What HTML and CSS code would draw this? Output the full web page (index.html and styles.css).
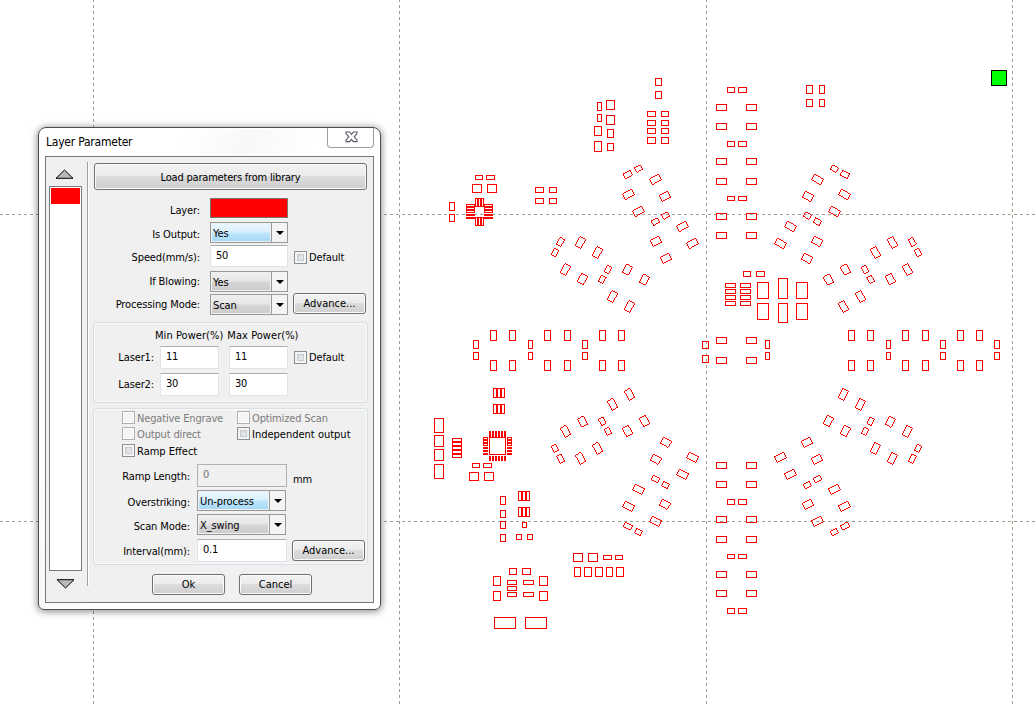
FILE: index.html
```html
<!DOCTYPE html>
<html lang="en">
<head>
<meta charset="utf-8">
<title>Layer Parameter</title>
<link rel="stylesheet" href="styles.css">
</head>
<body>
<main class="workspace">
  <svg class="board" width="1035" height="706" viewBox="0 0 1035 706">
    <g class="grid-lines">
      <path d="M93.5-1V706M399.5-1V706M706.5-1V706M1012.5-1V706M0 214.5H1035M0 521.5H1035"/>
    </g>
    <g id="pads" class="pads"></g>
    <rect class="origin" x="991.5" y="70.5" width="15" height="15"/>
  </svg>

  <section class="dialog">
    <header class="titlebar">
      <h1 class="title">Layer Parameter</h1>
      <button class="close" aria-label="Close">
        <svg width="13" height="12" viewBox="0 0 13 12"><path d="M1 1H4.6L6.5 3.3 8.4 1H12V2.6L9.2 5.8 12 9V10.6H8.4L6.5 8.4 4.6 10.6H1V9L3.8 5.8 1 2.6Z" fill="#fff" stroke="#55586a" stroke-width="1.1"/></svg>
      </button>
    </header>
    <div class="client">
      <aside class="layers">
        <svg class="up" width="19" height="10" viewBox="0 0 19 10"><path d="M1 9.3L9.5 1 18 9.3Z" fill="#b8b8b8" stroke="#000"/></svg>
        <div class="layer-list"><div class="layer-item"></div></div>
        <svg class="down" width="19" height="10" viewBox="0 0 19 10"><path d="M1 .7H18L9.5 9Z" fill="#b8b8b8" stroke="#000"/></svg>
      </aside>
      <div class="divider"></div>
      <div class="main">
        <button class="btn load">Load parameters from library</button>
        <div class="form general">
          <label>Layer:</label><div class="swatch"></div><span></span>
          <label>Is Output:</label><div class="combo hot"><span>Yes</span><i></i></div><span></span>
          <label>Speed(mm/s):</label><div class="field">50</div><div class="check"><i></i>Default</div>
          <label class="raised">If Blowing:</label><div class="combo"><span>Yes</span><i></i></div><span></span>
          <label class="raised">Processing Mode:</label><div class="combo"><span>Scan</span><i></i></div><button class="btn">Advance...</button>
        </div>
        <div class="group power">
          <div class="heads"><span>Min Power(%)</span><span>Max Power(%)</span></div>
          <div class="laser"><label>Laser1:</label><div class="field">11</div><div class="field">11</div><div class="check"><i></i>Default</div></div>
          <div class="laser"><label>Laser2:</label><div class="field">30</div><div class="field">30</div></div>
        </div>
        <div class="group scan">
          <div class="checks">
            <div class="check off"><i></i><span>Negative Engrave</span></div>
            <div class="check off"><i></i><span>Optimized Scan</span></div>
            <div class="check off"><i></i><span>Output direct</span></div>
            <div class="check"><i></i><span class="wide">Independent output</span></div>
            <div class="check"><i></i><span class="wide">Ramp Effect</span></div>
          </div>
          <div class="form details">
            <label>Ramp Length:</label><div class="field disabled">0</div><span class="unit">mm</span>
            <label>Overstriking:</label><div class="combo hot"><span>Un-process</span><i></i></div><span></span>
            <label>Scan Mode:</label><div class="combo"><span>X_swing</span><i></i></div><span></span>
            <label>Interval(mm):</label><div class="field">0.1</div><button class="btn">Advance...</button>
          </div>
        </div>
        <footer class="actions"><button class="btn">Ok</button><button class="btn">Cancel</button></footer>
      </div>
    </div>
  </section>
</main>
<script src="board.js"></script>
</body>
</html>
```
FILE: styles.css
```css
* { box-sizing: border-box; }
body { margin: 0; background: #fff; overflow: hidden; }
.workspace { position: relative; width: 1035px; height: 706px; overflow: hidden; background: #fff; }
.board { display: block; }
.grid-lines path { fill: none; stroke: #a0a090; stroke-dasharray: 3 3; shape-rendering: crispEdges; }
.pads { fill: none; stroke: #f00; shape-rendering: crispEdges; }
.pads .solid { fill: #f00; stroke: none; }
.origin { fill: #0f0; stroke: #000; shape-rendering: crispEdges; }

.dialog {
  position: absolute; left: 38px; top: 127px; width: 343px; height: 483px;
  display: flex; flex-direction: column; padding: 0 6px 6px;
  border: 1px solid #4d4d4d; border-radius: 8px 8px 6px 6px;
  background: linear-gradient(115deg, #fff 0, #fff 26%, #f8f8f8 38%, #fff 50%);
  box-shadow: 0 1px 7px 1px rgba(0,0,0,.42), inset 0 0 0 1px #fff;
  font: 11px/14px "DejaVu Sans Condensed", "DejaVu Sans", sans-serif; color: #000;
  letter-spacing: -.12px;
}
.titlebar { display: flex; justify-content: space-between; height: 28px; flex: none; }
.title { margin: 7px 0 0 1px; font-size: 12px; line-height: 15px; font-weight: 400; letter-spacing: -.22px; white-space: nowrap; }
.close { width: 47px; height: 20px; padding: 0 0 0 1px; border: 1px solid #999da8; border-top: 0; border-radius: 0 0 4px 4px; background: #fff; display: flex; justify-content: center; align-items: center; }
.close svg { margin-top: -1px; }
.client { display: flex; width: 329px; height: 447px; border: 1px solid #777; background: #f0f0f0; }

.layers { display: flex; flex-direction: column; width: 33px; margin-left: 3px; padding-top: 12px; flex: none; }
.layers svg { display: block; margin-left: 6px; }
.layers .down { margin-left: 7px; }
.layer-list { height: 385px; margin: 7px 0 8px; border: 1px solid #777b85; padding: 1px; background: #fff; }
.layer-item { height: 16px; background: #f00; }
.divider { width: 2px; height: 424px; margin: 5px 0 0 5px; border-left: 1px solid #a0a0a0; border-right: 1px solid #fff; flex: none; }
.main { display: flex; flex-direction: column; width: 275px; margin: 6px 0 0 4px; }

.btn {
  margin: 0; padding: 1px 0 0; border: 1px solid #707070; border-radius: 3px; color: #000; font: inherit;
  letter-spacing: 0; box-shadow: inset 0 0 0 1px #fafafa; width: 73px; height: 21px; white-space: nowrap;
  background: linear-gradient(#f2f2f2 0, #ebebeb 48%, #dcdcdc 50%, #cfcfcf 100%);
}
.load { width: 273px; height: 27px; margin-left: 1px; padding-top: 2px; letter-spacing: -.2px; }

.form { display: grid; align-items: start; }
.form label { text-align: right; line-height: 26px; white-space: nowrap; }
.general { grid-template-columns: 107px 88px 80px; grid-template-rows: 24px 23px 26px 23px 28px; margin-top: 8px; }
.general > :nth-child(3n+2) { margin-left: 10px; width: 78px; }
.general > :nth-child(3n) { margin-left: 5px; }
.general .btn { margin-top: -1px; }
.general .raised { line-height: 22px; }
.swatch { height: 20px; border: 1px solid #777; background: #f00; }
.combo { display: flex; height: 21px; border: 1px solid #999; background: #f0f0f0; padding: 1px 0 1px 1px; }
.combo span { flex: 1; padding-left: 1px; line-height: 19px; background: linear-gradient(#eee 0, #e6e6e6 48%, #d6d6d6 52%, #cdcdcd 100%); }
.combo.hot span { background: linear-gradient(#eaf6fd 0, #d9f0fc 48%, #bee6fd 52%, #a7d9f5 100%); }
.combo i { width: 16px; margin: -1px 0 -1px 1px; border-left: 1px solid #999; background: #f4f4f4; display: flex; align-items: center; justify-content: center; }
.combo i::after { content: ""; border: 4px solid transparent; border-top-color: #000; border-bottom: 0; }
.field { height: 22px; padding: 3px 5px; border: 1px solid #e2e3ea; border-top-color: #abadb3; background: #fff; letter-spacing: -.2px; }
.field.disabled { border-color: #b0b0b0; background: #f0f0f0; color: #777; }
.check { display: flex; align-items: center; gap: 2px; height: 13px; line-height: 15px; white-space: nowrap; letter-spacing: -.15px; }
.check i { width: 13px; height: 13px; border: 1px solid #8e8f8f; background: linear-gradient(135deg, #c9ced6, #f6f6f6); box-shadow: inset 0 0 0 2px #f4f4f4, inset 0 0 0 3px #c5cad1; flex: none; }
.check span { margin-top: 1px; }
.check .wide { letter-spacing: 0; }
.check.off { color: #7b7b7b; }
.check.off i { border-color: #b1b1b1; background: #f5f5f5; box-shadow: inset 0 0 0 1px #fbfbfb; }
.general .check { margin: 6px 0 0 6px; }

.group { border: 1px solid #d5dfe5; border-radius: 3px; box-shadow: inset 0 0 0 1px #fafafa; }
.power { height: 81px; padding-top: 6px; }
.heads { display: flex; gap: 4px; height: 17px; padding-left: 61px; letter-spacing: .05px; white-space: nowrap; }
.laser { display: flex; height: 27px; }
.laser label { width: 60px; text-align: right; line-height: 24px; margin-right: 6px; }
.laser .field { width: 59px; height: 23px; margin-right: 10px; }
.laser .check { margin: 5px 0 0 -4px; }
.scan { height: 157px; margin-top: 5px; padding-top: 2px; }
.checks { display: grid; grid-template-columns: 115px 120px; grid-template-rows: 16px 17px 20px; margin-left: 28px; }
.details { grid-template-columns: 96px 98px 76px; grid-template-rows: 26px 24px 25px 23px; }
.details > :nth-child(3n+2) { margin-left: 7px; width: 90px; }
.details > :nth-child(3n) { margin-left: 5px; }
.details .btn { margin: 1px 0 0 4px; }
.details .field { height: 23px; }
.details .combo { width: 89px; }
.unit { line-height: 31px; }
.actions { display: flex; gap: 14px; margin: 9px 0 0 59px; }
```
FILE: board.js
```js
const SVG_NS = "http://www.w3.org/2000/svg";
const pads = document.getElementById("pads");

function add(x, y, w, h, angle, solid) {
  const r = document.createElementNS(SVG_NS, "rect");
  r.setAttribute("x", x);
  r.setAttribute("y", y);
  r.setAttribute("width", w);
  r.setAttribute("height", h);
  if (angle) r.setAttribute("transform", `rotate(${angle} ${x + w / 2} ${y + h / 2})`);
  if (solid) r.setAttribute("class", "solid");
  pads.appendChild(r);
}
const pad = (x, y, w, h) => add(x + 0.5, y + 0.5, w - 1, h - 1);
const bar = (x, y, w, h) => add(x, y, w, h, 0, true);

// Individual components: x, y, width, height
[
  [655,78,7,8],[655,91,7,8],[597,102,5,9],[606,100,9,10],[597,114,5,8],[606,115,9,10],
  [594,126,8,10],[607,129,7,9],[594,141,8,11],[607,143,7,8],
  [647,111,9,6],[661,111,8,6],[647,120,9,6],[661,120,8,6],[647,128,9,6],[661,128,8,6],[647,137,9,7],[661,137,8,7],
  [475,175,8,5],[486,175,9,5],[472,184,10,9],[487,184,10,9],
  [535,187,9,6],[549,187,8,6],[535,198,9,6],[549,198,8,6],[449,202,6,9],[449,214,6,8],
  [806,85,7,9],[819,85,6,9],[806,99,7,8],[819,99,6,8],
  [743,271,8,6],[756,271,9,6],[757,282,12,17],[757,303,12,17],[778,278,10,21],[778,303,10,20],[796,282,12,17],[796,303,12,17],
  [716,337,11,7],[746,337,11,7],[716,357,11,7],[746,357,11,7],[702,341,7,8],[702,355,7,8],[765,340,5,9],[765,352,5,8],
  [434,418,10,15],[434,435,10,12],[434,449,10,12],[434,464,10,15],
  [489,437,17,18],[472,463,8,5],[483,463,9,5],[469,472,10,9],[484,472,10,9],
  [500,496,6,9],[500,510,6,8],[500,521,6,8],[500,534,6,8],[522,522,5,6],[516,534,6,6],[527,534,6,6],
  [573,553,10,9],[588,553,10,9],[603,555,9,5],[615,555,8,5],
  [574,567,7,10],[584,567,8,10],[595,567,8,10],[606,567,7,10],[616,567,8,10],
  [509,568,8,7],[522,568,9,7],[493,576,8,10],[493,591,8,10],[539,576,9,10],[539,591,9,10],
  [507,580,10,5],[507,586,10,5],[507,592,10,5],[523,580,11,5],[523,592,11,5],
  [494,617,22,12],[525,617,22,12]
].forEach(p => pad(...p));

// Resistor array beside the centre
[283, 289, 295, 301].forEach(y => { pad(725, y, 11, 5); pad(740, y, 11, 5); });

// Vertical arms
[104, 123, 158, 178, 213, 232, 462, 481, 516, 536, 571, 590].forEach(y => { pad(716, y, 11, 7); pad(746, y, 11, 7); });
[[87,6],[141,6],[196,5],[499,6],[554,5],[608,6]].forEach(([y, h]) => { pad(727, y, 8, h); pad(738, y, 9, h); });

// Horizontal arms
[490, 509, 544, 564, 599, 618, 848, 867, 902, 922, 957, 976].forEach(x => { pad(x, 330, 7, 11); pad(x, 360, 7, 11); });
[[473,6],[528,5],[582,6],[886,5],[940,6],[994,6]].forEach(([x, w]) => { pad(x, 340, w, 9); pad(x, 352, w, 8); });

// Small chip
[475, 478, 481].forEach(x => { pad(x, 198, 3, 9); pad(x, 217, 3, 9); });
[466, 484].forEach(x => {
  [204, 207, 210].forEach(y => pad(x, y, 9, 3));
  [214, 217].forEach(y => bar(x, y, 9, 2));
});

// Large chip
[489, 492, 495, 498, 501, 504].forEach(x => { bar(x, 431, 2, 6); bar(x, 456, 2, 5); });
[483, 507].forEach(x => {
  [437, 440, 443].forEach(y => pad(x, y, 5, 3));
  [447, 450, 453].forEach(y => bar(x, y, 5, 2));
});

// Connectors
[[493,388],[493,404],[518,491],[518,507]].forEach(([x, y]) => [0, 4, 8].forEach(d => pad(x + d, y, 4, 10)));
[438, 442, 446, 450, 454].forEach(y => pad(452, y, 10, 4));

// Diagonal arms, mirrored into the four quadrants: centre x, centre y, length, width, angle
[
  [834.4,168.7,6.6,5,28],[845,174.5,8,5.2,28],[817.4,179.4,10.3,6.3,28],[808,196.4,9.3,6.8,28],
  [844.4,194.4,10.3,6.3,28],[834.4,211.4,10.3,6.3,28],[807.4,215.7,6.6,5,28],[817.4,221.7,7,5,28],
  [790.4,226.4,10.3,6.3,28],[780.4,243.4,10.3,6.3,28],[817,241.4,9.3,6.8,28],[807,258.4,9.3,6.8,28],
  [828.4,279.7,9.3,6.8,62],[845.4,269.7,9.3,6.8,62],[865,269.4,7,5,62],[870.7,279.4,7,5,62],
  [843.4,306.4,10.3,6.3,62],[860.4,296.4,10.3,6.3,62],[875.4,252.4,10.3,6.3,62],[892.4,242.4,10.3,6.3,62],
  [912.4,242,8,5,62],[918,252.4,7,5,62],[890.4,279,9.3,6.8,62],[907.4,269.4,10.3,6.3,62]
].forEach(([cx, cy, w, h, a]) => {
  const mx = 1472.9 - cx, my = 700.7 - cy;
  add(cx - w / 2, cy - h / 2, w, h, a);
  add(mx - w / 2, cy - h / 2, w, h, -a);
  add(cx - w / 2, my - h / 2, w, h, -a);
  add(mx - w / 2, my - h / 2, w, h, a);
});
```
